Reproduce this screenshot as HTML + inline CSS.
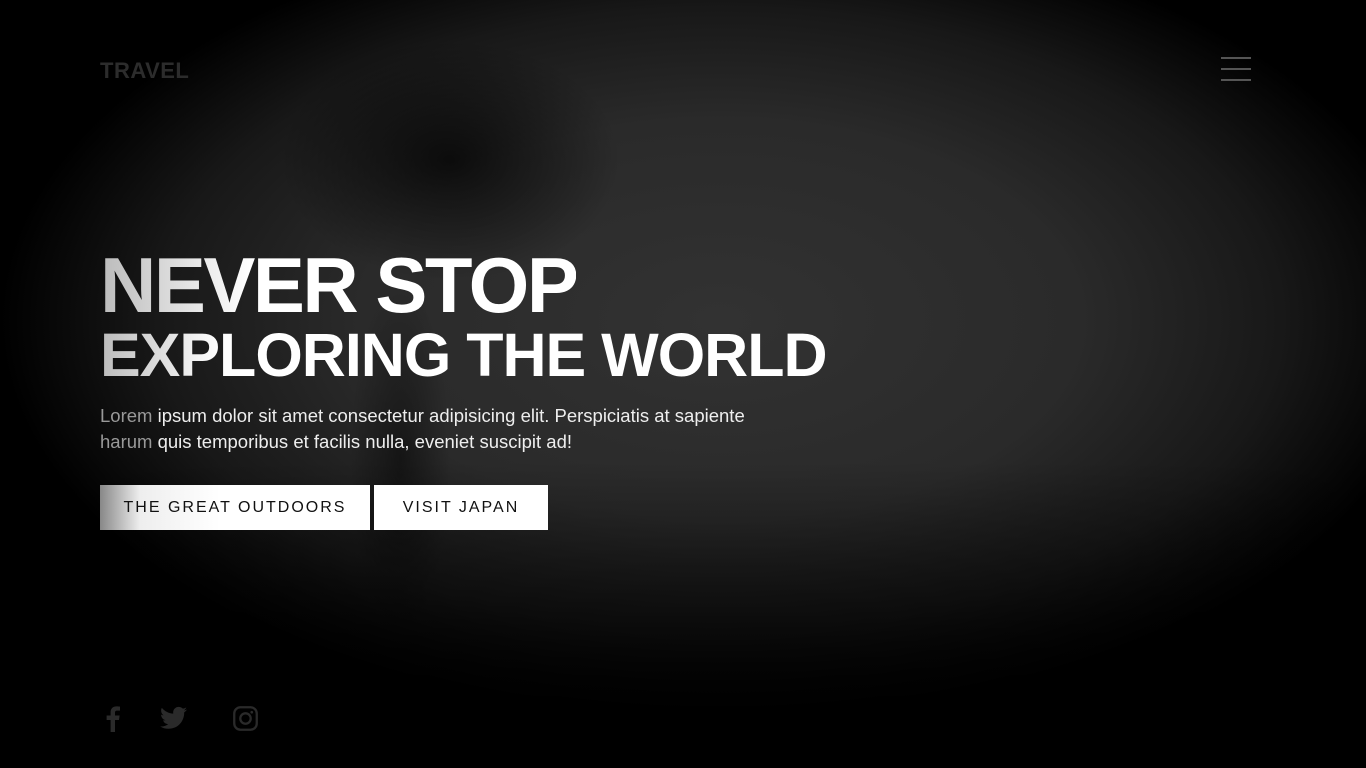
<!DOCTYPE html>
<html><head><meta charset="utf-8"><style>
*{margin:0;padding:0;box-sizing:border-box}
body{width:1366px;height:768px;overflow:hidden;background:#000;font-family:"Liberation Sans",sans-serif;position:relative}
.bg{position:absolute;inset:0;background:
radial-gradient(ellipse 170px 120px at 450px 160px,rgba(0,0,0,.7),rgba(0,0,0,0) 100%),
radial-gradient(ellipse 50px 180px at 400px 460px,rgba(0,0,0,.45),rgba(0,0,0,0) 100%),
radial-gradient(ellipse 720px 400px at 720px 320px,#323232 0%,#2a2a2a 50%,#181818 78%,#000 100%);}
.bot{position:absolute;left:0;right:0;top:0;height:768px;background:linear-gradient(rgba(0,0,0,0) 60%,rgba(0,0,0,.45) 78%,#000 96%)}
.logo{position:absolute;left:100px;top:58px;font-weight:bold;font-size:22px;color:#2c2c2c;letter-spacing:.5px}
.ham{position:absolute;left:1221px;width:30px;height:2px;background:#555}
h1{position:absolute;left:100px;color:#fff;font-weight:bold;white-space:nowrap}
.h1{top:240px;font-size:78px;letter-spacing:-2.5px;background:linear-gradient(90deg,#bbb,#fff 150px);-webkit-background-clip:text;color:transparent}
.h2{top:320px;font-size:61px;letter-spacing:-1px;background:linear-gradient(90deg,#bbb,#fff 120px);-webkit-background-clip:text;color:transparent}
p{position:absolute;left:100px;top:403px;width:700px;font-size:18.5px;line-height:26px;color:#eee}
p span{color:#999}
.btn{position:absolute;top:485px;height:45px;background:#fff;color:#111;font-size:16px;letter-spacing:2px;display:flex;align-items:center;justify-content:center}
.b1{left:100px;width:270px;background:linear-gradient(90deg,#888,#eee 40px,#fff 120px)}
.b2{left:374px;width:174px}
svg{position:absolute;top:706px}
</style></head><body>
<div class="bg"></div><div class="bot"></div>
<div class="logo">TRAVEL</div>
<div class="ham" style="top:57px"></div><div class="ham" style="top:68px"></div><div class="ham" style="top:79px"></div>
<h1 class="h1">NEVER STOP</h1>
<h1 class="h2">EXPLORING THE WORLD</h1>
<p><span>Lorem</span> ipsum dolor sit amet consectetur adipisicing elit. Perspiciatis at sapiente <span>harum</span> quis temporibus et facilis nulla, eveniet suscipit ad!</p>
<div class="btn b1">THE GREAT OUTDOORS</div>
<div class="btn b2">VISIT JAPAN</div>
<svg style="left:106px" width="14" height="26" viewBox="0 0 14 26"><path d="M9 26V14h4l.6-4.5H9V6.8c0-1.3.4-2.2 2.2-2.2H14V.6C13.5.5 12 .4 10.4.4 7 .4 4.6 2.5 4.6 6.3v3.2H.6V14h4v12z" fill="#2a2a2a"/></svg>
<svg style="left:160px" width="27" height="24" viewBox="0 0 24 20"><path d="M24 2.4c-.9.4-1.8.7-2.8.8 1-.6 1.8-1.6 2.2-2.7-1 .6-2 1-3.1 1.2C19.3.7 18 .1 16.6.1c-2.7 0-4.9 2.2-4.9 4.9 0 .4 0 .8.1 1.1C7.700 5.9 4.1 4 1.7 1 1.2 1.7 1 2.6 1 3.5c0 1.7.9 3.2 2.2 4.1-.8 0-1.6-.2-2.2-.6v.1c0 2.4 1.7 4.4 3.9 4.8-.4.1-.8.2-1.3.2-.3 0-.6 0-.9-.1.6 2 2.4 3.4 4.6 3.4-1.7 1.3-3.800 2.1-6.1 2.1-.4 0-.8 0-1.2-.1 2.2 1.4 4.8 2.2 7.5 2.2 9.1 0 14-7.5 14-14v-.6c1-.7 1.8-1.6 2.5-2.6z" fill="#2a2a2a"/></svg>
<svg style="left:233px" width="25" height="25" viewBox="0 0 24 24"><rect x="1.2" y="1.2" width="21.6" height="21.6" rx="6" fill="none" stroke="#2a2a2a" stroke-width="2.2"/><circle cx="12" cy="12" r="5" fill="none" stroke="#2a2a2a" stroke-width="2.2"/><circle cx="18" cy="6" r="1.3" fill="#2a2a2a"/></svg>
</body></html>
